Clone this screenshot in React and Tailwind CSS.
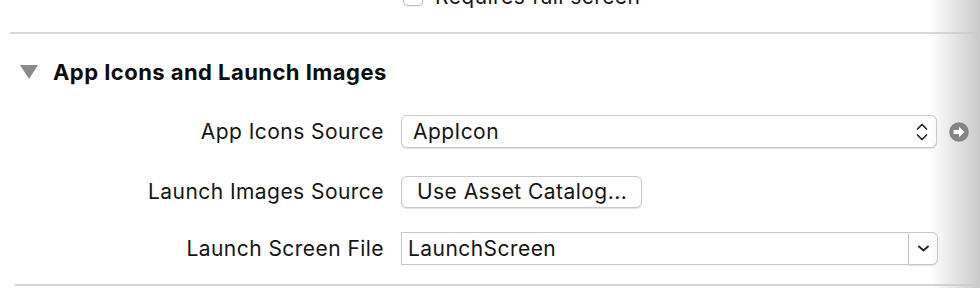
import React from 'react';

const ROWS_FONT = "font-['Inter','Liberation_Sans',sans-serif]";
const TEXT = 'text-[21px] tracking-[0.45px] text-[#151515]';

const UpDownChevrons = () => (
  <svg width="14" height="24" viewBox="0 0 14 24" fill="none" stroke="#262626" strokeWidth="1.7" strokeLinecap="round" strokeLinejoin="round">
    <path d="M2.5 9 L7 4.5 L11.5 9" />
    <path d="M2.5 15 L7 19.5 L11.5 15" />
  </svg>
);

const DownChevron = () => (
  <svg width="13" height="9" viewBox="0 0 13 9" fill="none" stroke="#262626" strokeWidth="1.9" strokeLinecap="round" strokeLinejoin="round">
    <path d="M2 2.5 L6.5 6.5 L11 2.5" />
  </svg>
);

const GoArrow = () => (
  <svg width="20" height="20" viewBox="0 0 20 20">
    <circle cx="10" cy="10" r="9.8" fill="#848484" />
    <path d="M4.6 8.1 H10 V4.8 L15.4 10 L10 15.2 V11.9 H4.6 Z" fill="#ffffff" />
  </svg>
);

const Label = ({ children }) => (
  <div className={`w-[384px] shrink-0 text-right ${TEXT}`}>{children}</div>
);

export default function App() {
  return (
    <div className={`relative w-[980px] h-[288px] bg-white overflow-hidden ${ROWS_FONT}`}>
      {/* cut-off row from the section above */}
      <div className="flex items-center h-[20px] -mt-[14px] pl-[403px] gap-[12px]">
        <div className="w-[20px] h-[20px] rounded-[5px] border border-[#bdbdbd] bg-white shadow-[0_1px_1px_rgba(0,0,0,0.08)]" />
        <span className={`${TEXT} leading-none`}>Requires full screen</span>
      </div>

      <div className="mt-[26px] ml-[10px] h-[2px] bg-[#d8d8d8]" />

      {/* section header */}
      <div className="mt-[26px] h-[24px] flex items-center pl-[20px]">
        <svg width="18" height="14" viewBox="0 0 18 14">
          <path d="M0 0 H18 L9 14 Z" fill="#8a8a8a" />
        </svg>
        <span className="ml-[15px] text-[22px] font-bold text-[#0d0d0d] tracking-[0.45px]">App Icons and Launch Images</span>
      </div>

      {/* form */}
      <div className="mt-[31px] flex items-center gap-[17px]">
        <Label>App Icons Source</Label>
        <div className="w-[536px] h-[33px] rounded-[6px] border border-[#c9c9c9] bg-white shadow-[0_1px_1px_rgba(0,0,0,0.12)] flex items-center justify-between pl-[11px] pr-[7px]">
          <span className={TEXT}>AppIcon</span>
          <UpDownChevrons />
        </div>
        <div className="relative z-10 -ml-[5px]">
          <GoArrow />
        </div>
      </div>

      <div className="mt-[28px] flex items-center gap-[17px]">
        <Label>Launch Images Source</Label>
        <div className="w-[241px] h-[32px] rounded-[6px] border border-[#c9c9c9] bg-white shadow-[0_1px_1px_rgba(0,0,0,0.12)] flex items-center pl-[15px]">
          <span className={TEXT}>Use Asset Catalog...</span>
        </div>
      </div>

      <div className="mt-[24px] flex items-center gap-[17px]">
        <Label>Launch Screen File</Label>
        <div className="flex w-[537px] h-[33px]">
          <div className="flex-1 border border-[#c6c6c6] border-r-0 bg-white flex items-center pl-[6px]">
            <span className={TEXT}>LaunchScreen</span>
          </div>
          <div className="w-[30px] rounded-r-[6px] border border-[#c9c9c9] bg-white shadow-[0_1px_1px_rgba(0,0,0,0.12)] flex items-center justify-center">
            <DownChevron />
          </div>
        </div>
      </div>

      <div className="mt-[19px] ml-[15px] h-[2px] bg-[#d4d4d4]" />

      {/* window edge shading */}
      <div className="pointer-events-none absolute top-0 right-0 h-full w-[50px] bg-gradient-to-r from-transparent to-[#cacaca]" />
    </div>
  );
}
